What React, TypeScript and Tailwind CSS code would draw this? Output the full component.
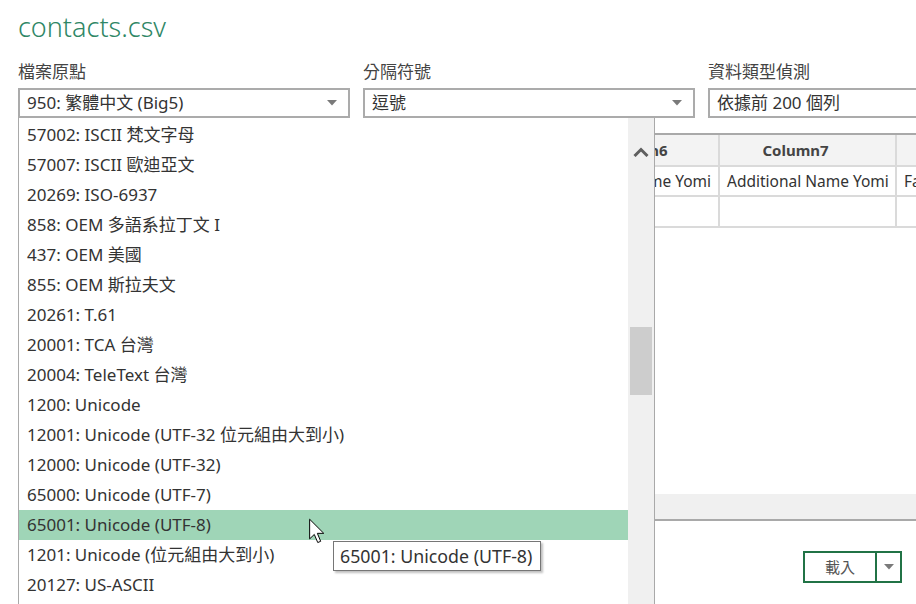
import React from "react";

const encodings = [
  "57002: ISCII 梵文字母",
  "57007: ISCII 歐迪亞文",
  "20269: ISO-6937",
  "858: OEM 多語系拉丁文 I",
  "437: OEM 美國",
  "855: OEM 斯拉夫文",
  "20261: T.61",
  "20001: TCA 台灣",
  "20004: TeleText 台灣",
  "1200: Unicode",
  "12001: Unicode (UTF-32 位元組由大到小)",
  "12000: Unicode (UTF-32)",
  "65000: Unicode (UTF-7)",
  "65001: Unicode (UTF-8)",
  "1201: Unicode (位元組由大到小)",
  "20127: US-ASCII",
  "20866: 斯拉夫文 (KOI8-R)",
];

const selected = "65001: Unicode (UTF-8)";

const columns = [
  { name: "Column1", value: "Name", w: "w-[100px]" },
  { name: "Column2", value: "Given Name", w: "w-[100px]" },
  { name: "Column3", value: "Additional Name", w: "w-[120px]" },
  { name: "Column4", value: "Family Name", w: "w-[117px]" },
  { name: "Column5", value: "Yomi Name", w: "w-[120px]" },
  { name: "Column6", value: "Given Name Yomi", w: "w-[145px]" },
  { name: "Column7", value: "Additional Name Yomi", w: "w-[177px]" },
  { name: "Column8", value: "Family Name Yomi", w: "w-[160px]" },
];

const Caret = () => (
  <svg width="10" height="6" viewBox="0 0 10 6" className="shrink-0">
    <path d="M0 0 H10 L5 5.5 Z" fill="#7a7a7a" />
  </svg>
);

function Field({ label, value, arrow }: { label: string; value: string; arrow?: boolean }) {
  return (
    <div className="flex flex-col">
      <label className="h-[30px] text-[17px] leading-[28px] text-[#444]">{label}</label>
      <div className="flex h-[30px] items-center justify-between border-2 border-[#ababab] pl-[7px] pr-[11px] text-[17px] text-[#333]">
        <span>{value}</span>
        {arrow && <Caret />}
      </div>
    </div>
  );
}

export default function App() {
  return (
    <div className="relative h-[604px] w-[916px] overflow-hidden bg-white font-['Noto_Sans','Noto_Sans_CJK_TC',sans-serif] text-[#333]">
      <h1 className="h-[58px] pl-[18px] pt-[11px] text-[27px] font-light leading-[32px] text-[#2f8766]">
        contacts.csv
      </h1>

      <div className="grid grid-cols-[332px_332px_332px] gap-x-[13px] pl-[18px]">
        <Field label="檔案原點" value="950: 繁體中文 (Big5)" arrow />
        <Field label="分隔符號" value="逗號" arrow />
        <Field label="資料類型偵測" value="依據前 200 個列" />
      </div>

      {/* preview table */}
      <div className="ml-[18px] mt-[15px] flex h-[388px] flex-col border-y-2 border-[#a9a9a9]">
        <div className="flex h-[30px] bg-[#f3f3f3]">
          {columns.map((c) => (
            <div
              key={c.name}
              className={`${c.w} shrink-0 border-r-2 border-[#dadada] pr-[24px] text-center text-[15px] font-bold leading-[30px] text-[#444]`}
            >
              {c.name}
            </div>
          ))}
        </div>
        <div className="flex h-[32px] border-y-2 border-[#dadada]">
          {columns.map((c) => (
            <div
              key={c.name}
              className={`${c.w} shrink-0 overflow-hidden whitespace-nowrap border-r-2 border-[#dadada] px-[7px] text-[15.5px] leading-[28px] text-[#333]`}
            >
              {c.value}
            </div>
          ))}
        </div>
        <div className="flex h-[31px] border-b-2 border-[#dadada]">
          {columns.map((c) => (
            <div key={c.name} className={`${c.w} shrink-0 border-r-2 border-[#dadada]`} />
          ))}
        </div>
        <div className="flex-1" />
        <div className="h-[25px] bg-[#f0f0f0]" />
      </div>

      <div className="mt-[30px] flex justify-end pr-[14px]">
        <div className="flex h-[32px] border-2 border-[#217346]">
          <button className="w-[72px] border-r-2 border-[#217346] text-[15px] text-[#555]">載入</button>
          <div className="flex w-[23px] items-center justify-center">
            <Caret />
          </div>
        </div>
      </div>

      {/* open encoding list */}
      <div className="absolute left-[18px] top-[118px] flex h-[500px] w-[637px] border-x border-[#a9a9a9] bg-white">
        <ul className="flex-1 pt-[2px]">
          {encodings.map((e) => (
            <li
              key={e}
              className={`h-[30px] whitespace-nowrap pl-[8px] text-[17px] leading-[30px] text-[#333] ${
                e === selected ? "bg-[#9fd5b7]" : ""
              }`}
            >
              {e}
            </li>
          ))}
        </ul>
        <div className="flex w-[26px] flex-col items-center bg-[#f0f0f0]">
          <svg width="16" height="10" viewBox="0 0 16 10" className="mt-[29px]">
            <path d="M1.5 9 L8 2.5 L14.5 9" fill="none" stroke="#5f5f5f" strokeWidth="3" />
          </svg>
          <div className="mt-[170px] h-[68px] w-[22px] bg-[#cdcdcd]" />
        </div>
      </div>

      {/* hover tooltip */}
      <div className="absolute left-[333px] top-[541px] h-[30px] w-[208px] border border-[#767676] bg-white px-[6px] text-[17.8px] leading-[28px] whitespace-nowrap text-[#333] shadow-[2px_2px_2px_rgba(0,0,0,0.25)]">
        {selected}
      </div>

      {/* mouse pointer */}
      <svg width="20" height="27" viewBox="0 0 14 22" className="absolute left-[307px] top-[518px]">
        <path
          d="M1 1 V17 L4.8 13.4 L7.6 20 L10 19 L7.3 12.5 H12.5 Z"
          fill="#fff"
          stroke="#000"
          strokeWidth="0.8"
          strokeLinejoin="miter"
        />
      </svg>
    </div>
  );
}
